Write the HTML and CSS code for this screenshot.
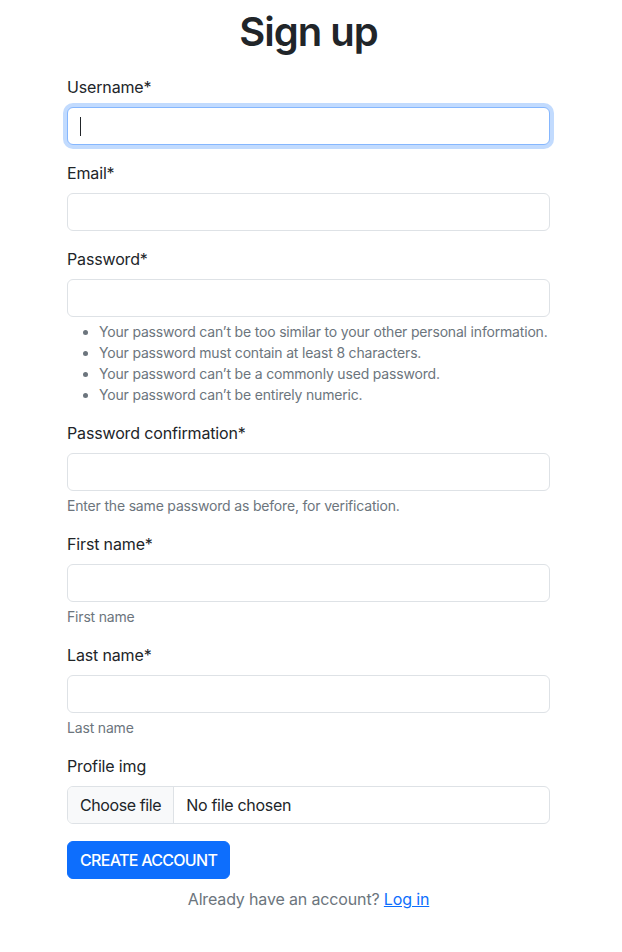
FILE: index.html
```html
<!DOCTYPE html>
<html lang="en">
<head>
<meta charset="utf-8">
<title>Sign up</title>
<link rel="stylesheet" href="styles.css">
</head>
<body>
<main class="container">
  <h1 class="title">Sign up</h1>
  <form class="form">
    <div class="field">
      <label class="label" for="username">Username*</label>
      <div class="input-wrap">
        <input class="control focused" id="username" type="text">
        <span class="caret"></span>
      </div>
    </div>
    <div class="field">
      <label class="label" for="email">Email*</label>
      <input class="control" id="email" type="email">
    </div>
    <div class="field">
      <label class="label" for="password1">Password*</label>
      <input class="control" id="password1" type="password">
      <ul class="help help-list">
        <li>Your password can’t be too similar to your other personal information.</li>
        <li>Your password must contain at least 8 characters.</li>
        <li>Your password can’t be a commonly used password.</li>
        <li>Your password can’t be entirely numeric.</li>
      </ul>
    </div>
    <div class="field">
      <label class="label" for="password2">Password confirmation*</label>
      <input class="control" id="password2" type="password">
      <div class="help">Enter the same password as before, for verification.</div>
    </div>
    <div class="field">
      <label class="label" for="first">First name*</label>
      <input class="control" id="first" type="text">
      <div class="help">First name</div>
    </div>
    <div class="field">
      <label class="label" for="last">Last name*</label>
      <input class="control" id="last" type="text">
      <div class="help">Last name</div>
    </div>
    <div class="field">
      <label class="label" for="img">Profile img</label>
      <div class="file">
        <span class="file-btn">Choose file</span>
        <span class="file-name">No file chosen</span>
      </div>
    </div>
    <button class="btn" type="button">CREATE ACCOUNT</button>
    <p class="login">Already have an account? <a class="link" href="#">Log in</a></p>
  </form>
</main>
</body>
</html>
```
FILE: styles.css
```css
* { box-sizing: border-box; }
html, body { margin: 0; padding: 0; background: #fff; }
body {
  font-family: Inter, "Noto Sans", Roboto, sans-serif;
  font-size: 16px;
  line-height: 1.5;
  color: #212529;
  letter-spacing: -0.15px;
}
.container {
  width: 483px;
  margin-left: 67px;
  padding-top: 8px;
}
.title {
  margin: 0 0 19px;
  font-size: 40px;
  line-height: 48px;
  font-weight: 600;
  text-align: center;
  letter-spacing: -1px;
}
.form { margin: 0; }
.field { margin-bottom: 16px; }
.label {
  display: block;
  margin-bottom: 8px;
  font-size: 16px;
  line-height: 24px;
}
.input-wrap { position: relative; }
.control {
  display: block;
  width: 100%;
  height: 38px;
  padding: 6px 12px;
  font: inherit;
  color: #212529;
  background: #fff;
  border: 1px solid #dee2e6;
  border-radius: 6px;
  outline: none;
}
.control.focused {
  border-color: #86b7fe;
  box-shadow: 0 0 0 4px rgba(13, 110, 253, 0.25);
}
.caret {
  position: absolute;
  left: 13px;
  top: 10px;
  width: 1px;
  height: 19px;
  background: #212529;
}
.help {
  margin-top: 4px;
  font-size: 14px;
  line-height: 21px;
  color: #6c757d;
  letter-spacing: -0.18px;
}
.help-list {
  margin-bottom: 0;
  padding-left: 32px;
}
.file {
  display: flex;
  height: 38px;
  border: 1px solid #dee2e6;
  border-radius: 6px;
  overflow: hidden;
  font-size: 16px;
  line-height: 24px;
}
.file-btn {
  padding: 6px 12px;
  background: #f8f9fa;
  border-right: 1px solid #dee2e6;
  color: #212529;
  letter-spacing: -0.4px;
}
.file-name {
  padding: 6px 12px;
  color: #212529;
  letter-spacing: -0.3px;
}
.btn {
  display: inline-block;
  height: 38px;
  margin-top: 1px;
  padding: 6px 12px;
  font: inherit;
  font-weight: 500;
  color: #fff;
  background: #0d6efd;
  border: 1px solid #0d6efd;
  border-radius: 6px;
  letter-spacing: -0.7px;
}
.login {
  margin: 8px 0 0;
  text-align: center;
  color: #6c757d;
}
.link { color: #0d6efd; text-decoration: underline; }
```
